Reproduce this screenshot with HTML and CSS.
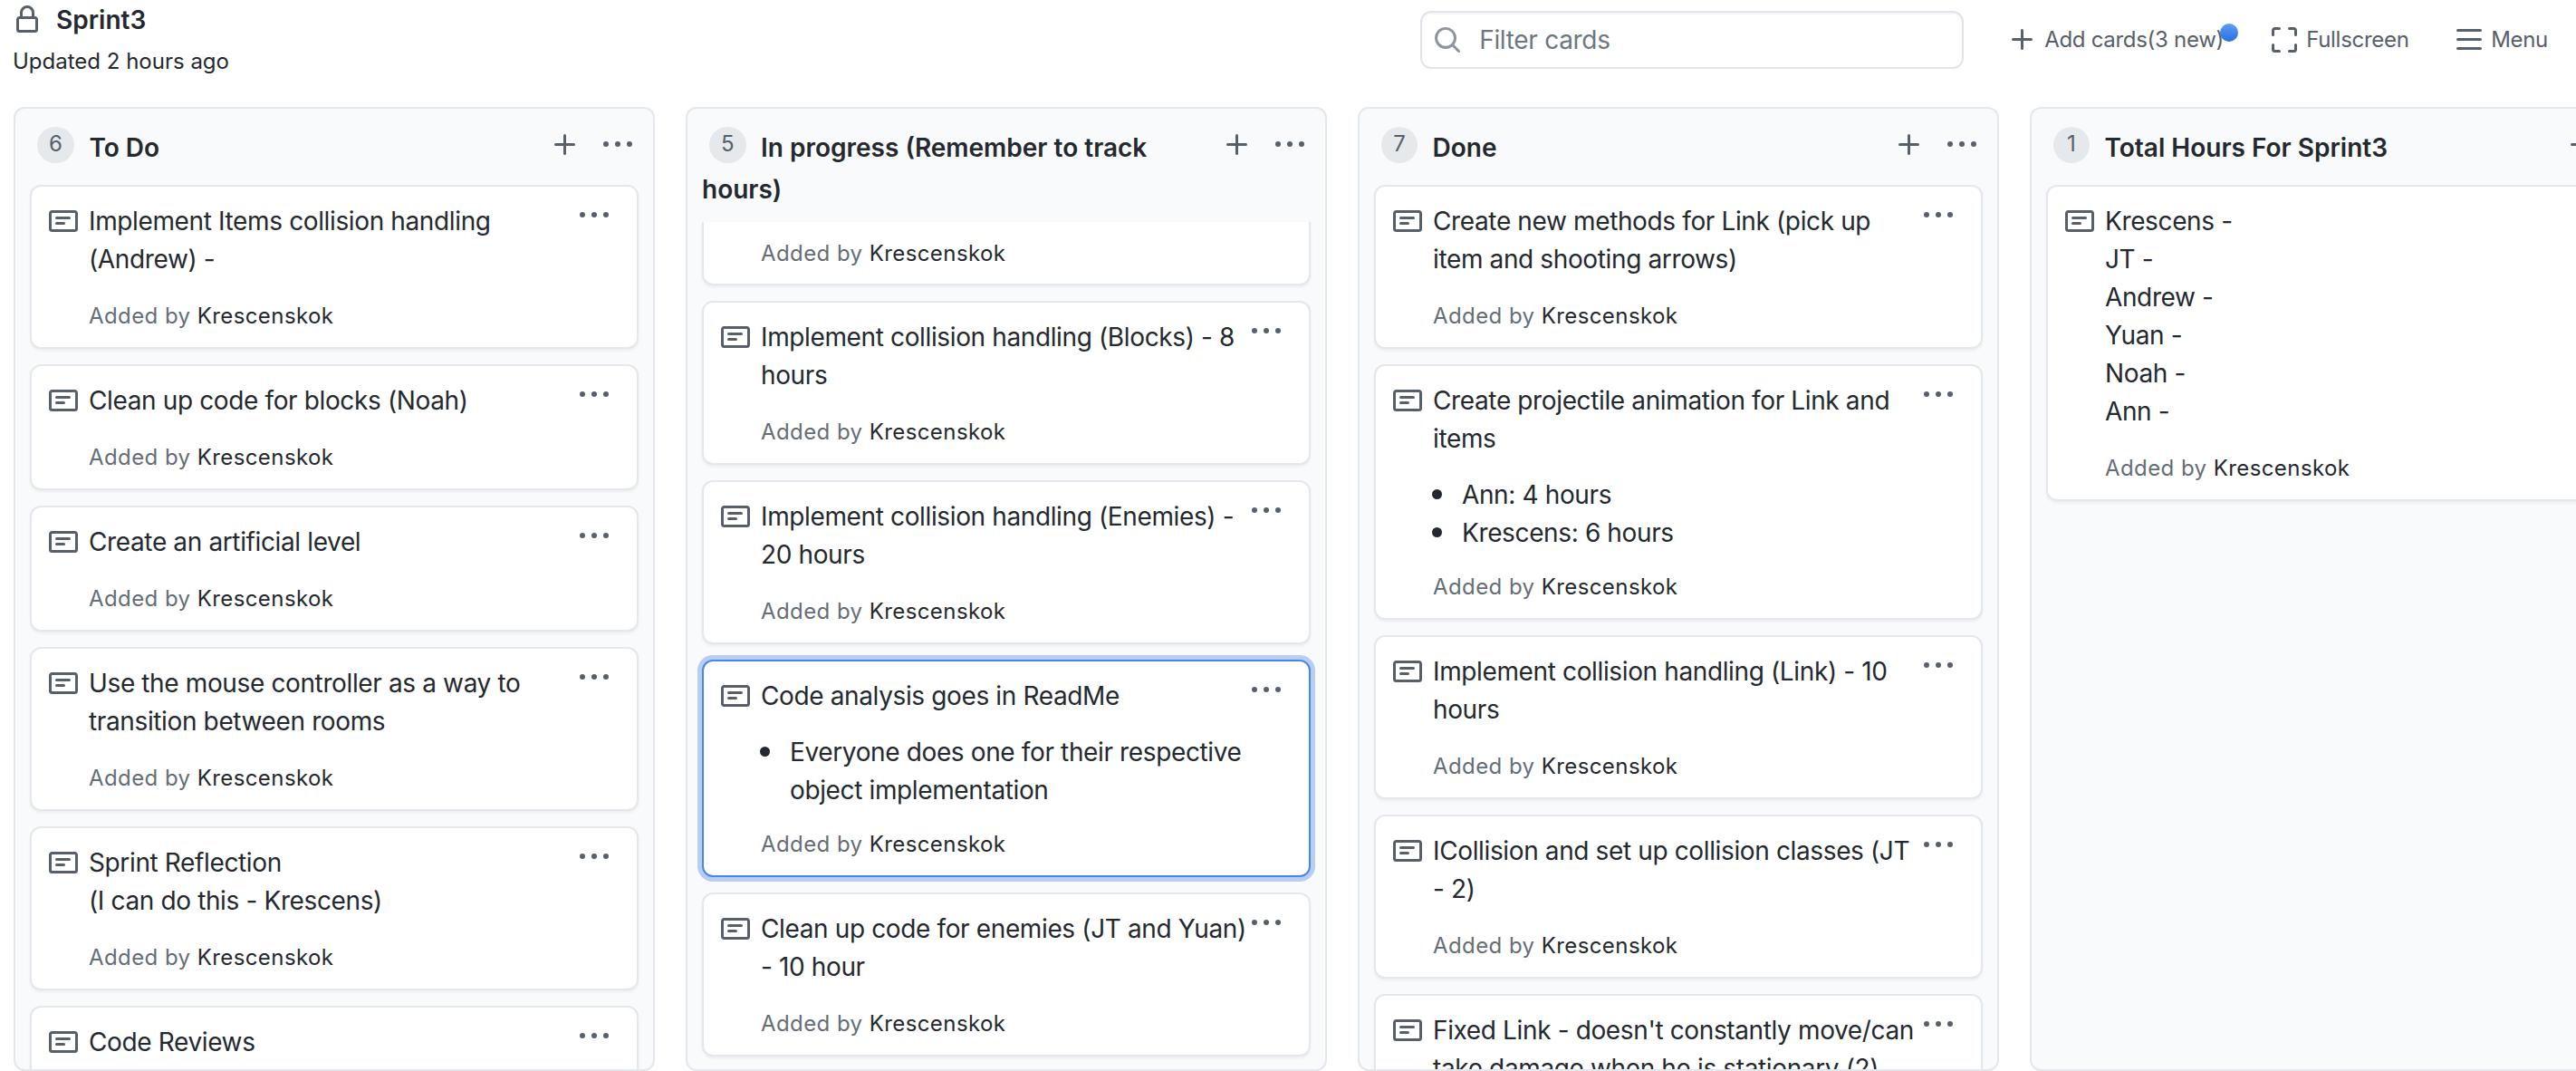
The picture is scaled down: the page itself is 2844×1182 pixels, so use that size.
FILE: index.html
```html
<!DOCTYPE html>
<html lang="en">
<head>
<meta charset="utf-8">
<title>Sprint3</title>
<link rel="stylesheet" href="styles.css">
</head>
<body>
<svg class="sprites" aria-hidden="true">
  <symbol id="i-note" viewBox="0 0 16 16"><path d="M0 3.75C0 2.784.784 2 1.75 2h12.5c.966 0 1.75.784 1.75 1.75v8.5A1.75 1.75 0 0 1 14.25 14H1.75A1.75 1.75 0 0 1 0 12.25Zm1.75-.25a.25.25 0 0 0-.25.25v8.5c0 .138.112.25.25.25h12.5a.25.25 0 0 0 .25-.25v-8.5a.25.25 0 0 0-.25-.25ZM3.5 6.25a.75.75 0 0 1 .75-.75h7a.75.75 0 0 1 0 1.5h-7a.75.75 0 0 1-.75-.75Zm.75 2.25h4a.75.75 0 0 1 0 1.5h-4a.75.75 0 0 1 0-1.5Z"/></symbol>
  <symbol id="i-kebab" viewBox="0 0 16 16"><path d="M8 9a1.5 1.5 0 1 0 0-3 1.5 1.5 0 0 0 0 3ZM1.5 9a1.5 1.5 0 1 0 0-3 1.5 1.5 0 0 0 0 3Zm13 0a1.5 1.5 0 1 0 0-3 1.5 1.5 0 0 0 0 3Z"/></symbol>
  <symbol id="i-plus" viewBox="0 0 16 16"><path d="M7.75 2a.75.75 0 0 1 .75.75V7h4.25a.75.75 0 0 1 0 1.5H8.5v4.25a.75.75 0 0 1-1.5 0V8.5H2.75a.75.75 0 0 1 0-1.5H7V2.75A.75.75 0 0 1 7.75 2Z"/></symbol>
  <symbol id="i-lock" viewBox="0 0 16 16"><path d="M4 4a4 4 0 0 1 8 0v2h.25c.966 0 1.75.784 1.75 1.75v5.5A1.75 1.75 0 0 1 12.25 15h-8.5A1.75 1.75 0 0 1 2 13.25v-5.5C2 6.784 2.784 6 3.75 6H4Zm8.25 3.5h-8.5a.25.25 0 0 0-.25.25v5.5c0 .138.112.25.25.25h8.5a.25.25 0 0 0 .25-.25v-5.5a.25.25 0 0 0-.25-.25ZM10.5 6V4a2.5 2.5 0 1 0-5 0v2Z"/></symbol>
  <symbol id="i-search" viewBox="0 0 16 16"><path d="M10.68 11.74a6 6 0 0 1-7.922-8.982 6 6 0 0 1 8.982 7.922l3.04 3.04a.749.749 0 0 1-.326 1.275.749.749 0 0 1-.734-.215ZM11.5 7a4.499 4.499 0 1 0-8.997 0A4.499 4.499 0 0 0 11.5 7Z"/></symbol>
  <symbol id="i-full" viewBox="0 0 16 16"><path d="M1.75 10a.75.75 0 0 1 .75.75v2.5c0 .138.112.25.25.25h2.5a.75.75 0 0 1 0 1.5h-2.5A1.75 1.75 0 0 1 1 13.25v-2.5a.75.75 0 0 1 .75-.75Zm12.5 0a.75.75 0 0 1 .75.75v2.5A1.75 1.75 0 0 1 13.25 15h-2.5a.75.75 0 0 1 0-1.5h2.5a.25.25 0 0 0 .25-.25v-2.5a.75.75 0 0 1 .75-.75ZM2.75 2.5a.25.25 0 0 0-.25.25v2.5a.75.75 0 0 1-1.5 0v-2.5C1 1.784 1.784 1 2.75 1h2.5a.75.75 0 0 1 0 1.5ZM10 1.75a.75.75 0 0 1 .75-.75h2.5c.966 0 1.75.784 1.75 1.75v2.5a.75.75 0 0 1-1.5 0v-2.5a.25.25 0 0 0-.25-.25h-2.5a.75.75 0 0 1-.75-.75Z"/></symbol>
  <symbol id="i-bars" viewBox="0 0 16 16"><path d="M1 2.75A.75.75 0 0 1 1.75 2h12.5a.75.75 0 0 1 0 1.5H1.75A.75.75 0 0 1 1 2.75Zm0 5A.75.75 0 0 1 1.75 7h12.5a.75.75 0 0 1 0 1.5H1.75A.75.75 0 0 1 1 7.75ZM1.75 12h12.5a.75.75 0 0 1 0 1.5H1.75a.75.75 0 0 1 0-1.5Z"/></symbol>
</svg>

<div class="page">
  <header class="topbar">
    <div class="project">
      <div class="project-name">
        <svg class="icon"><use href="#i-lock"/></svg>
        <span>Sprint3</span>
      </div>
      <div class="project-updated">Updated 2 hours ago</div>
    </div>
    <div class="filter">
      <svg class="icon filter-icon"><use href="#i-search"/></svg>
      <span class="filter-text">Filter cards</span>
    </div>
    <nav class="actions">
      <div class="action action-add">
        <svg class="icon"><use href="#i-plus"/></svg>
        <span>Add cards(3 new)</span>
        <span class="new-dot"></span>
      </div>
      <div class="action action-full">
        <svg class="icon"><use href="#i-full"/></svg>
        <span>Fullscreen</span>
      </div>
      <div class="action action-menu">
        <svg class="icon"><use href="#i-bars"/></svg>
        <span>Menu</span>
      </div>
    </nav>
  </header>

  <main class="board">
    <section class="column">
      <div class="col-head">
        <div class="col-tools">
          <svg class="icon"><use href="#i-plus"/></svg>
          <svg class="icon"><use href="#i-kebab"/></svg>
        </div>
        <span class="counter">6</span><span class="col-title">To Do</span>
      </div>
      <div class="cards">
        <article class="card"><svg class="icon note"><use href="#i-note"/></svg><div class="card-body"><p class="card-title">Implement Items collision handling<br>(Andrew) -</p><p class="card-note">Added by <b>Krescenskok</b></p></div><svg class="icon kebab"><use href="#i-kebab"/></svg></article>
        <article class="card"><svg class="icon note"><use href="#i-note"/></svg><div class="card-body"><p class="card-title">Clean up code for blocks (Noah)</p><p class="card-note">Added by <b>Krescenskok</b></p></div><svg class="icon kebab"><use href="#i-kebab"/></svg></article>
        <article class="card"><svg class="icon note"><use href="#i-note"/></svg><div class="card-body"><p class="card-title">Create an artificial level</p><p class="card-note">Added by <b>Krescenskok</b></p></div><svg class="icon kebab"><use href="#i-kebab"/></svg></article>
        <article class="card"><svg class="icon note"><use href="#i-note"/></svg><div class="card-body"><p class="card-title">Use the mouse controller as a way to transition between rooms</p><p class="card-note">Added by <b>Krescenskok</b></p></div><svg class="icon kebab"><use href="#i-kebab"/></svg></article>
        <article class="card"><svg class="icon note"><use href="#i-note"/></svg><div class="card-body"><p class="card-title">Sprint Reflection<br>(I can do this - Krescens)</p><p class="card-note">Added by <b>Krescenskok</b></p></div><svg class="icon kebab"><use href="#i-kebab"/></svg></article>
        <article class="card"><svg class="icon note"><use href="#i-note"/></svg><div class="card-body"><p class="card-title">Code Reviews</p><p class="card-note">Added by <b>Krescenskok</b></p></div><svg class="icon kebab"><use href="#i-kebab"/></svg></article>
      </div>
    </section>

    <section class="column">
      <div class="col-head">
        <div class="col-tools">
          <svg class="icon"><use href="#i-plus"/></svg>
          <svg class="icon"><use href="#i-kebab"/></svg>
        </div>
        <span class="counter">5</span><span class="col-title">In progress (Remember to track hours)</span>
      </div>
      <div class="cards cards-scrolled">
        <article class="card card-clipped"><div class="card-body"><p class="card-note">Added by <b>Krescenskok</b></p></div></article>
        <article class="card"><svg class="icon note"><use href="#i-note"/></svg><div class="card-body"><p class="card-title">Implement collision handling (Blocks) - 8 hours</p><p class="card-note">Added by <b>Krescenskok</b></p></div><svg class="icon kebab"><use href="#i-kebab"/></svg></article>
        <article class="card"><svg class="icon note"><use href="#i-note"/></svg><div class="card-body"><p class="card-title">Implement collision handling (Enemies) - 20 hours</p><p class="card-note">Added by <b>Krescenskok</b></p></div><svg class="icon kebab"><use href="#i-kebab"/></svg></article>
        <article class="card card-focus"><svg class="icon note"><use href="#i-note"/></svg><div class="card-body"><p class="card-title">Code analysis goes in ReadMe</p><ul class="card-list"><li>Everyone does one for their respective object implementation</li></ul><p class="card-note">Added by <b>Krescenskok</b></p></div><svg class="icon kebab"><use href="#i-kebab"/></svg></article>
        <article class="card"><svg class="icon note"><use href="#i-note"/></svg><div class="card-body"><p class="card-title">Clean up code for enemies (JT and Yuan) - 10 hour</p><p class="card-note">Added by <b>Krescenskok</b></p></div><svg class="icon kebab"><use href="#i-kebab"/></svg></article>
      </div>
    </section>

    <section class="column">
      <div class="col-head">
        <div class="col-tools">
          <svg class="icon"><use href="#i-plus"/></svg>
          <svg class="icon"><use href="#i-kebab"/></svg>
        </div>
        <span class="counter">7</span><span class="col-title">Done</span>
      </div>
      <div class="cards">
        <article class="card"><svg class="icon note"><use href="#i-note"/></svg><div class="card-body"><p class="card-title">Create new methods for Link (pick up item and shooting arrows)</p><p class="card-note">Added by <b>Krescenskok</b></p></div><svg class="icon kebab"><use href="#i-kebab"/></svg></article>
        <article class="card"><svg class="icon note"><use href="#i-note"/></svg><div class="card-body"><p class="card-title">Create projectile animation for Link and items</p><ul class="card-list"><li>Ann: 4 hours</li><li>Krescens: 6 hours</li></ul><p class="card-note">Added by <b>Krescenskok</b></p></div><svg class="icon kebab"><use href="#i-kebab"/></svg></article>
        <article class="card"><svg class="icon note"><use href="#i-note"/></svg><div class="card-body"><p class="card-title">Implement collision handling (Link) - 10 hours</p><p class="card-note">Added by <b>Krescenskok</b></p></div><svg class="icon kebab"><use href="#i-kebab"/></svg></article>
        <article class="card"><svg class="icon note"><use href="#i-note"/></svg><div class="card-body"><p class="card-title">ICollision and set up collision classes (JT - 2)</p><p class="card-note">Added by <b>Krescenskok</b></p></div><svg class="icon kebab"><use href="#i-kebab"/></svg></article>
        <article class="card"><svg class="icon note"><use href="#i-note"/></svg><div class="card-body"><p class="card-title">Fixed Link - doesn't constantly move/can take damage when he is stationary (2)</p><p class="card-note">Added by <b>Krescenskok</b></p></div><svg class="icon kebab"><use href="#i-kebab"/></svg></article>
      </div>
    </section>

    <section class="column">
      <div class="col-head">
        <div class="col-tools">
          <svg class="icon"><use href="#i-plus"/></svg>
          <svg class="icon"><use href="#i-kebab"/></svg>
        </div>
        <span class="counter">1</span><span class="col-title">Total Hours For Sprint3</span>
      </div>
      <div class="cards">
        <article class="card"><svg class="icon note"><use href="#i-note"/></svg><div class="card-body"><p class="card-title">Krescens -<br>JT -<br>Andrew -<br>Yuan -<br>Noah -<br>Ann -</p><p class="card-note">Added by <b>Krescenskok</b></p></div><svg class="icon kebab"><use href="#i-kebab"/></svg></article>
      </div>
    </section>
  </main>
</div>
</body>
</html>
```

FILE: styles.css
```css
* { box-sizing: border-box; }

html, body {
  margin: 0;
  height: 100%;
  background: #fff;
}

body {
  font-family: Inter, "Liberation Sans", sans-serif;
  font-size: 28px;
  line-height: 42px;
  color: #24292f;
  overflow: hidden;
}

.sprites { display: none; }

.icon {
  display: block;
  flex: none;
  width: 32px;
  height: 32px;
  fill: #57606a;
}

.page {
  height: 1182px;
  overflow: hidden;
}

/* top bar */
.topbar {
  display: flex;
  height: 118px;
  padding: 0 31px 0 14px;
}

.project { flex: 1; }

.project-name {
  display: flex;
  align-items: center;
  gap: 16px;
  height: 44px;
  font-weight: 600;
  line-height: 44px;
}

.project-updated {
  margin-top: 6px;
  font-size: 24px;
  line-height: 36px;
}

.filter {
  display: flex;
  align-items: center;
  gap: 19px;
  width: 600px;
  height: 64px;
  margin-top: 12px;
  padding-left: 12px;
  border: 2px solid #e1e4e8;
  border-radius: 12px;
  box-shadow: inset 0 2px 0 rgba(225, 228, 232, .35);
}

.filter-icon { fill: #8c959f; }

.filter-text {
  color: #6e7781;
  letter-spacing: -.3px;
}

.actions {
  display: flex;
  margin-left: 49px;
  padding-top: 28px;
  font-size: 24px;
  line-height: 32px;
  letter-spacing: -.3px;
  color: #57606a;
}

.action {
  display: flex;
  gap: 8px;
  height: 32px;
  position: relative;
}

.action-add { width: 289px; }
.action-full { width: 204px; }

.new-dot {
  position: absolute;
  left: 234px;
  top: -2px;
  width: 20px;
  height: 20px;
  border-radius: 50%;
  background: linear-gradient(#5f9df8, #2a6ee0);
}

/* board */
.board {
  display: flex;
  gap: 34px;
  padding-left: 15px;
  height: 1064px;
}

.column {
  flex: none;
  width: 708px;
  height: 1064px;
  overflow: hidden;
  background: #f9fafc;
  border: 2px solid #e4e7eb;
  border-radius: 12px;
  display: flex;
  flex-direction: column;
}

.col-head {
  flex: none;
  padding: 20px 16px 13px;
  line-height: 46px;
}

.col-tools {
  float: right;
  display: flex;
  gap: 26px;
  margin: 4px 7px 0 0;
}

.counter {
  display: inline-block;
  vertical-align: top;
  min-width: 40px;
  height: 40px;
  margin: 0 16.5px 0 8px;
  padding: 0 13px;
  border-radius: 20px;
  background: #e6e9ec;
  color: #57606a;
  font-size: 24px;
  line-height: 38px;
  text-align: center;
}

.col-title { font-weight: 600; }

.cards {
  flex: 1;
  min-height: 0;
  overflow: hidden;
  padding: 5px 16px 0;
  display: flex;
  flex-direction: column;
  gap: 17px;
}

.cards-scrolled { padding-top: 0; }

.card {
  flex: none;
  display: flex;
  align-items: flex-start;
  width: 672px;
  padding: 18px 31px 16px 19px;
  background: #fff;
  border: 2px solid #e4e7eb;
  border-radius: 12px;
  box-shadow: 0 2px 3px rgba(31, 35, 40, .06);
}

.card-clipped {
  height: 70px;
  padding: 17px 31px 16px 63px;
  border-top: 0;
  border-top-left-radius: 0;
  border-top-right-radius: 0;
}

.card-clipped .card-note { margin-top: 0; }

.card-focus {
  border-color: #4388f0;
  box-shadow: 0 0 0 5px #b7cef0;
}

.note { margin: 4px 12px 0 0; }
.kebab { margin-top: -2px; }

.card-body {
  flex: 1;
  min-width: 0;
}

.card-title {
  margin: -1px 0 0;
  letter-spacing: -.37px;
}

.card-note {
  margin: 24px 0 0;
  font-size: 24px;
  line-height: 36px;
  letter-spacing: .42px;
  color: #656d76;
}

.card-note b {
  font-weight: 400;
  color: #24292f;
}

.card-list {
  margin: 20px 0 -3px;
  padding-left: 32px;
  list-style: none;
  letter-spacing: -.37px;
}

.card-list li { position: relative; }

.card-list li::before {
  content: "";
  position: absolute;
  left: -33px;
  top: 15px;
  width: 11px;
  height: 11px;
  border-radius: 50%;
  background: #24292f;
}
```
